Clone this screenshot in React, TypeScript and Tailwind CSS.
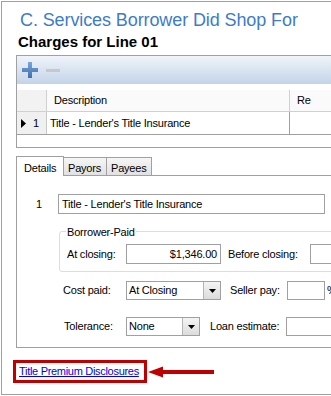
import React from "react"

function PlusIcon() {
  return (
    <svg width="16" height="16" viewBox="0 0 16 16">
      <defs>
        <linearGradient id="pl" x1="0" y1="0" x2="0" y2="1">
          <stop offset="0" stopColor="#7aa6da" />
          <stop offset="1" stopColor="#3f6fae" />
        </linearGradient>
      </defs>
      <path d="M6 0h4v6h6v4h-6v6h-4v-6h-6v-4h6z" fill="url(#pl)" />
    </svg>
  )
}

function DropButton() {
  return (
    <div className="w-[17px] h-full border-l border-[#b5b5b5] bg-gradient-to-b from-[#f4f4f4] to-[#dcdcdc] flex items-center justify-center">
      <svg width="7" height="4" viewBox="0 0 7 4">
        <path d="M0 0h7l-3.5 4z" fill="#000" />
      </svg>
    </div>
  )
}

function RedArrow() {
  return (
    <svg width="66" height="12" viewBox="0 0 66 12">
      <path d="M0 6L15 0.5V11.5Z" fill="#c00000" />
      <rect x="14" y="4" width="52" height="4" fill="#c00000" />
    </svg>
  )
}

export default function App() {
  return (
    <div className="w-[331px] h-[396px] bg-white overflow-hidden pt-px pl-px font-['Liberation_Sans',Arial,sans-serif] text-[11px] tracking-[-0.2px] text-black">
      <div className="h-[394px] border-l border-t border-b border-[#a0a0a0] pl-[14px] overflow-hidden">
        {/* heading */}
        <div className="h-[31px] pt-[7px] pl-[4px] text-[18px] leading-[22px] tracking-[-0.1px] text-[#3d7cc9] whitespace-nowrap">
          C. Services Borrower Did Shop For
        </div>
        <div className="h-[22px] pl-[2px] text-[15px] leading-[18px] font-bold tracking-normal whitespace-nowrap">
          Charges for Line 01
        </div>

        {/* grid */}
        <div className="w-[340px] h-[93px] border border-[#a0a0a0] flex flex-col">
          <div className="h-[28px] bg-gradient-to-b from-[#f0f4fa] to-[#c3d4e9] flex items-center gap-[8px] pl-[5px]">
            <PlusIcon />
            <div className="w-[14px] h-[3px] bg-[#c8c8c8] mt-[1px]" />
          </div>
          <div className="h-[6px]" />
          <div className="h-[22px] flex border-b border-[#d0d0d0]">
            <div className="w-[30px] border-r border-[#d0d0d0] bg-[#f2f2f2]" />
            <div className="w-[243px] border-r border-[#d0d0d0] bg-[#fafafa] pl-[7px] flex items-center">Description</div>
            <div className="flex-1 bg-[#fafafa] pl-[7px] flex items-center">Re</div>
          </div>
          <div className="h-[23px] flex border-b border-[#a0a0a0]">
            <div className="w-[30px] border-r border-[#c8c8c8] bg-[#f0f0f0] flex items-center pl-[4px] gap-[7px]">
              <svg width="5" height="9" viewBox="0 0 5 9">
                <path d="M0 0l5 4.5L0 9z" fill="#000" />
              </svg>
              <span>1</span>
            </div>
            <div className="w-[243px] border-r border-[#a0a0a0] pl-[3px] flex items-center whitespace-nowrap">
              Title - Lender's Title Insurance
            </div>
            <div className="flex-1" />
          </div>
        </div>

        {/* tabs */}
        <div className="mt-[7px] h-[20px] flex items-end">
          <div className="h-[20px] w-[48px] border border-b-0 border-[#a0a0a0] bg-white pl-[7px] pt-[3px] relative top-px z-10">
            Details
          </div>
          <div className="h-[18px] w-[43px] border border-l-0 border-b-0 border-[#a0a0a0] bg-gradient-to-b from-[#f6f6f6] to-[#e1e1e1] pl-[4px] pt-[2px]">
            Payors
          </div>
          <div className="h-[18px] w-[45px] border border-l-0 border-b-0 border-[#a0a0a0] bg-gradient-to-b from-[#f6f6f6] to-[#e1e1e1] pl-[4px] pt-[2px]">
            Payees
          </div>
        </div>
        <div className="w-[340px] h-[173px] border border-[#a0a0a0] pt-[18px]">
          <div className="flex items-center h-[20px]">
            <span className="w-[41px] pl-[19px]">1</span>
            <div className="w-[267px] h-[20px] border border-[#a0a0a0] pl-[3px] flex items-center whitespace-nowrap">
              Title - Lender's Title Insurance
            </div>
          </div>

          <div className="relative ml-[42px] mt-[17px] w-[300px] h-[41px] border border-[#d5dfe5] rounded-[3px] pt-[12px] pl-[7px]">
            <span className="absolute -top-[8px] left-[6px] bg-white px-[1px]">Borrower-Paid</span>
            <div className="flex items-center h-[20px]">
              <span className="w-[59px]">At closing:</span>
              <div className="w-[95px] h-[20px] border border-[#a0a0a0] pr-[3px] flex items-center justify-end">$1,346.00</div>
              <span className="ml-[7px] w-[82px]">Before closing:</span>
              <div className="w-[40px] h-[20px] border border-[#a0a0a0]" />
            </div>
          </div>

          <div className="mt-[9px] flex items-center h-[19px]">
            <span className="w-[109px] pl-[46px]">Cost paid:</span>
            <div className="w-[95px] h-[19px] border border-[#a0a0a0] flex">
              <div className="flex-1 pl-[2px] flex items-center">At Closing</div>
              <DropButton />
            </div>
            <span className="ml-[9px] w-[57px]">Seller pay:</span>
            <div className="w-[38px] h-[19px] border border-[#a0a0a0]" />
            <span className="ml-[2px]">%</span>
          </div>

          <div className="mt-[17px] flex items-center h-[19px]">
            <span className="w-[109px] pl-[47px]">Tolerance:</span>
            <div className="w-[74px] h-[19px] border border-[#a0a0a0] flex">
              <div className="flex-1 pl-[2px] flex items-center">None</div>
              <DropButton />
            </div>
            <span className="ml-[10px] w-[76px]">Loan estimate:</span>
            <div className="w-[60px] h-[19px] border border-[#a0a0a0]" />
          </div>
        </div>

        {/* link */}
        <div className="mt-[12px] -ml-[3px] flex items-center">
          <div className="w-[134px] h-[23px] border-[3px] border-[#c00000] pl-[3px] flex items-center">
            <a href="#" className="text-[#0000ee] underline tracking-[-0.3px] whitespace-nowrap">Title Premium Disclosures</a>
          </div>
          <div className="ml-px mt-px flex">
            <RedArrow />
          </div>
        </div>
      </div>
    </div>
  )
}
